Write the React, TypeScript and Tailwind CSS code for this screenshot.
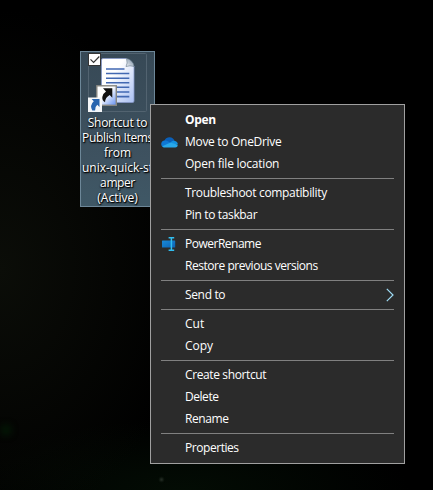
import React from "react";

type Item = { label: string; tracking: string; icon?: "cloud" | "rename"; bold?: boolean; submenu?: boolean };

const groups: Item[][] = [
  [
    { label: "Open", tracking: "tracking-[-0.3px]", bold: true },
    { label: "Move to OneDrive", tracking: "tracking-[-0.3px]", icon: "cloud" },
    { label: "Open file location", tracking: "tracking-[-0.23px]" },
  ],
  [
    { label: "Troubleshoot compatibility", tracking: "tracking-[-0.32px]" },
    { label: "Pin to taskbar", tracking: "tracking-[-0.36px]" },
  ],
  [
    { label: "PowerRename", tracking: "tracking-[-0.5px]", icon: "rename" },
    { label: "Restore previous versions", tracking: "tracking-[-0.46px]" },
  ],
  [{ label: "Send to", tracking: "tracking-[-0.35px]", submenu: true }],
  [
    { label: "Cut", tracking: "tracking-[0px]" },
    { label: "Copy", tracking: "tracking-[0px]" },
  ],
  [
    { label: "Create shortcut", tracking: "tracking-[-0.38px]" },
    { label: "Delete", tracking: "tracking-[-0.45px]" },
    { label: "Rename", tracking: "tracking-[-0.4px]" },
  ],
  [{ label: "Properties", tracking: "tracking-[-0.45px]" }],
];

const caption = [
  { text: "Shortcut to", tracking: "tracking-[-0.25px]" },
  { text: "Publish Items", tracking: "tracking-[-0.35px]" },
  { text: "from", tracking: "tracking-[-0.1px]" },
  { text: "unix-quick-st", tracking: "tracking-[-0.05px]" },
  { text: "amper", tracking: "tracking-[-0.4px]" },
  { text: "(Active)", tracking: "tracking-normal" },
];

function CloudIcon() {
  return (
    <svg width="17" height="11" viewBox="0 0 17 11">
      <path d="M3.5 3.6C4.6 1.2 6.6.2 8.7.3c2.3.1 4 1.500 4.700 3.500L9 7 3 6z" fill="#0a5fb8" />
      <path d="M3.600 3.500c1.500-.2 2.700.2 3.700.9L11 6.500 3 10.300C1.300 10 .2 8.700.2 7c0-1.900 1.500-3.400 3.400-3.500z" fill="#0f78d4" />
      <path d="M9.500 5.300c1-1.100 2.300-1.700 3.900-1.500 2 .3 3.400 1.700 3.400 3.500L13 8z" fill="#1490df" />
      <path d="M1.300 9.300 9.600 5.500l7 2.200c.4 1.500-.8 2.800-2.500 2.800H3.800c-1.100 0-2-.4-2.500-1.200z" fill="#28a8ea" />
    </svg>
  );
}

function RenameIcon() {
  return (
    <svg width="14" height="14" viewBox="0 0 14 14">
      <defs>
        <linearGradient id="tag" x1="0" y1="0" x2="1" y2="1">
          <stop offset="0" stopColor="#1989d8" />
          <stop offset="1" stopColor="#0c62b4" />
        </linearGradient>
      </defs>
      <rect x="0" y="3.400" width="13.200" height="7.200" rx=".5" fill="url(#tag)" />
      <path d="M6.600.8h5.600M6.600 13.200h5.600M9.400.8v12.400" stroke="#32bdef" strokeWidth="1.500" fill="none" />
    </svg>
  );
}

function ShortcutIcon() {
  return (
    <svg width="73" height="63" viewBox="81 52 73 63" className="block shrink-0">
      <defs>
        <linearGradient id="paper" x1="0" y1="0" x2="1" y2="1">
          <stop offset=".35" stopColor="#ffffff" />
          <stop offset="1" stopColor="#a9c0f2" />
        </linearGradient>
        <linearGradient id="badge" x1="0" y1="0" x2="1" y2="1">
          <stop offset=".45" stopColor="#ffffff" />
          <stop offset="1" stopColor="#5e8cf0" />
        </linearGradient>
        <linearGradient id="fold" x1="0" y1="1" x2="1" y2="0">
          <stop offset="0" stopColor="#f2f5fa" />
          <stop offset="1" stopColor="#6e8498" />
        </linearGradient>
      </defs>
      <rect x="88.500" y="53.500" width="58" height="58" rx="1" fill="none" stroke="#526370" />
      <path d="M103 58.500h23.500l7.500 8V101q0 1.500-1.500 1.500H103q-1.500 0-1.500-1.500V60q0-1.500 1.500-1.500z" fill="url(#paper)" stroke="#8698c8" strokeWidth=".8" />
      <path d="M126.500 58.500q1.500 5-.5 8 4-1.500 8 0 0-3-2.500-5.500t-5-2.500z" fill="url(#fold)" stroke="#607385" strokeWidth=".6" />
      <path d="M106 69h18.500M106 73.500h23.300M106 78.200h23.300M106 82.700h23.300M106 87.300h23.300M106 92h23.300M106 96.600h23.300" stroke="#4268b2" strokeWidth="1.600" />
      <rect x="96.800" y="85.800" width="19.500" height="19.500" fill="url(#badge)" stroke="#868680" strokeWidth="1.400" />
      <path d="M103 88.300h9.300v9.500l-2.600-2.700q-4.500 2.600-4.700 7.200-3-1.600-2.700-5.300.5-3.600 3.700-5.600z" fill="#101010" />
      <rect x="88" y="97.500" width="14" height="14.500" fill="#f4f6f8" />
      <path d="M91.600 99h7.900v7.900l-2.200-2.200q-2.400 1.800-2.200 5.800h-2.800q-2.900-5.200 1.500-9.200z" fill="#2764ae" />
      <rect x="88.500" y="53.500" width="12" height="12" fill="#fff" stroke="#353535" />
      <path d="m90.500 59.300 3.100 3.200 5.700-6" fill="none" stroke="#333" strokeWidth="1.200" />
    </svg>
  );
}

export default function App() {
  return (
    <main className="relative h-[490px] w-[433px] overflow-hidden bg-black bg-[radial-gradient(ellipse_190px_260px_at_0px_270px,#0b0d08,transparent),radial-gradient(ellipse_230px_70px_at_180px_490px,#030c04,transparent)] font-['Open_Sans','Noto_Sans',sans-serif] text-xs text-white">
      <div className="absolute top-[424px] left-0 size-3 rounded-full bg-[#031505] blur-[3px]" />
      <div className="absolute top-[478px] left-[160px] size-[3px] rounded-full bg-[#3c463c] blur-[1px]" />
      <section className="absolute top-[51px] left-[80px] h-[156px] w-[75px] border border-[#6d8798] bg-[linear-gradient(#374956,#3e5260_70%,#3f5866)]">
        <ShortcutIcon />
        <p className="text-center leading-[15px] whitespace-nowrap [text-shadow:1px_1px_1px_#000,0_1px_2px_#000]">
          {caption.map((line, index) => (
            <React.Fragment key={line.text}>
              {index > 0 && <br />}
              <span className={line.tracking}>{line.text}</span>
            </React.Fragment>
          ))}
        </p>
      </section>
      <nav className="absolute top-[104px] left-[150px] flex h-[360px] w-[255px] flex-col border border-[#a0a0a0] bg-[#2b2b2b] py-1">
        {groups.map((group, index) => (
          <React.Fragment key={group[0].label}>
            {index > 0 && <hr className="mx-2.5 my-[3px] border-0 border-t border-[#808080]" />}
            {group.map((item) => (
              <div key={item.label} className="flex h-[22px] items-center px-2.5">
                <span className="flex h-full w-6 shrink-0 items-center">
                  {item.icon === "cloud" && <CloudIcon />}
                  {item.icon === "rename" && <span className="ml-px"><RenameIcon /></span>}
                </span>
                <span className={`grow leading-[22px] whitespace-nowrap ${item.tracking} ${item.bold ? "font-bold" : "font-normal"}`}>{item.label}</span>
                {item.submenu && (
                  <svg width="8" height="14" viewBox="0 0 8 14">
                    <path d="m.8.8 6.200 6.200-6.200 6.200" fill="none" stroke="#9fdcf5" strokeWidth="1.200" />
                  </svg>
                )}
              </div>
            ))}
          </React.Fragment>
        ))}
      </nav>
    </main>
  );
}
